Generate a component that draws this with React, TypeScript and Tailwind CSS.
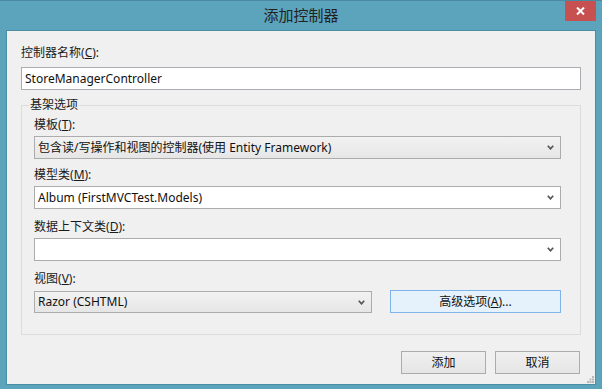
import React from "react";

const font = "font-['Noto_Sans','Noto_Sans_CJK_SC',sans-serif]";

function Chevron() {
  return (
    <svg width="7" height="5" viewBox="0 0 7 5" className="shrink-0">
      <path d="M0.8 0.8 L3.5 3.8 L6.2 0.8" fill="none" stroke="#555" strokeWidth="1.7" />
    </svg>
  );
}

function Label({ text, keyChar }: { text: string; keyChar: string }) {
  return (
    <div className="h-[16px] leading-[16px] text-[12px] text-[#1a1a1a]">
      {text}(<u>{keyChar}</u>):
    </div>
  );
}

function Combo({
  value,
  editable,
  className,
}: {
  value?: string;
  editable?: boolean;
  className?: string;
}) {
  return (
    <div
      className={`flex items-center pl-[3px] pr-[6px] border border-[#acacac] text-[12px] text-[#111] ${
        editable ? "bg-white" : "bg-gradient-to-b from-[#f2f2f2] to-[#e6e6e6]"
      } ${className ?? ""}`}
    >
      <span className="flex-1 truncate">{value}</span>
      <Chevron />
    </div>
  );
}

function DialogButton({ children }: { children: React.ReactNode }) {
  return (
    <button className="w-[85px] h-[23px] border border-[#acacac] bg-gradient-to-b from-[#f0f0f0] to-[#e5e5e5] text-[12px] text-[#111]">
      {children}
    </button>
  );
}

export default function App() {
  return (
    <div className={`w-[602px] h-[389px] bg-[#5ca4bc] border-t border-[#4a8aa0] flex flex-col ${font}`}>
      {/* title bar */}
      <div className="relative h-[29px] flex items-center justify-center">
        <span className="text-[15px] text-[#222] leading-none -mt-[1px]">添加控制器</span>
        <div className="absolute right-[6px] top-0 w-[31px] h-[20px] bg-[#c75050] flex items-center justify-center">
          <svg width="9" height="8" viewBox="0 0 9 8">
            <path d="M1 0.5 L8 7.5 M8 0.5 L1 7.5" stroke="#fff" strokeWidth="2" />
          </svg>
        </div>
      </div>

      {/* client area */}
      <div className="relative mx-[6px] h-[355px] bg-[#f0f0f0] border border-[#4b8da3] px-[14px] pt-[14px]">
        <Label text="控制器名称" keyChar="C" />
        <div className="mt-[6px] h-[23px] border border-[#abadb3] bg-white flex items-center pl-[3px] text-[12px] text-[#111]">
          StoreManagerController
        </div>

        <fieldset className="mt-[7px] border border-[#dcdcdc] pl-[12px] pr-[19px] pb-[21px]">
          <legend className="-ml-[5px] px-[1px] text-[12px] leading-[16px] text-[#1a1a1a]">基架选项</legend>

          <div className="mt-[4px]">
            <Label text="模板" keyChar="T" />
            <Combo className="mt-[3px] h-[23px]" value="包含读/写操作和视图的控制器(使用 Entity Framework)" />
          </div>

          <div className="mt-[8px]">
            <Label text="模型类" keyChar="M" />
            <Combo className="mt-[3px] h-[23px]" editable value="Album (FirstMVCTest.Models)" />
          </div>

          <div className="mt-[10px]">
            <Label text="数据上下文类" keyChar="D" />
            <Combo className="mt-[3px] h-[23px]" editable />
          </div>

          <div className="mt-[10px]">
            <Label text="视图" keyChar="V" />
            <div className="mt-[3px] flex items-end gap-[18px]">
              <Combo className="w-[338px] h-[22px]" value="Razor (CSHTML)" />
              <button className="flex-1 h-[23px] border border-[#7eb4ea] bg-[#e5f1fb] text-[12px] text-[#111]">
                高级选项(<u>A</u>)...
              </button>
            </div>
          </div>
        </fieldset>

        <div className="mt-[16px] flex justify-end gap-[9px] pr-[1px]">
          <DialogButton>添加</DialogButton>
          <DialogButton>取消</DialogButton>
        </div>

        {/* size grip */}
        <svg width="7" height="7" viewBox="0 0 7 7" className="absolute right-[1px] bottom-[1px]">
          <rect x="5" y="0" width="2" height="2" fill="#b8b8b8" />
          <rect x="2.5" y="2.5" width="2" height="2" fill="#b8b8b8" />
          <rect x="5" y="2.5" width="2" height="2" fill="#b8b8b8" />
          <rect x="0" y="5" width="2" height="2" fill="#b8b8b8" />
          <rect x="2.5" y="5" width="2" height="2" fill="#b8b8b8" />
          <rect x="5" y="5" width="2" height="2" fill="#b8b8b8" />
        </svg>
      </div>
    </div>
  );
}
